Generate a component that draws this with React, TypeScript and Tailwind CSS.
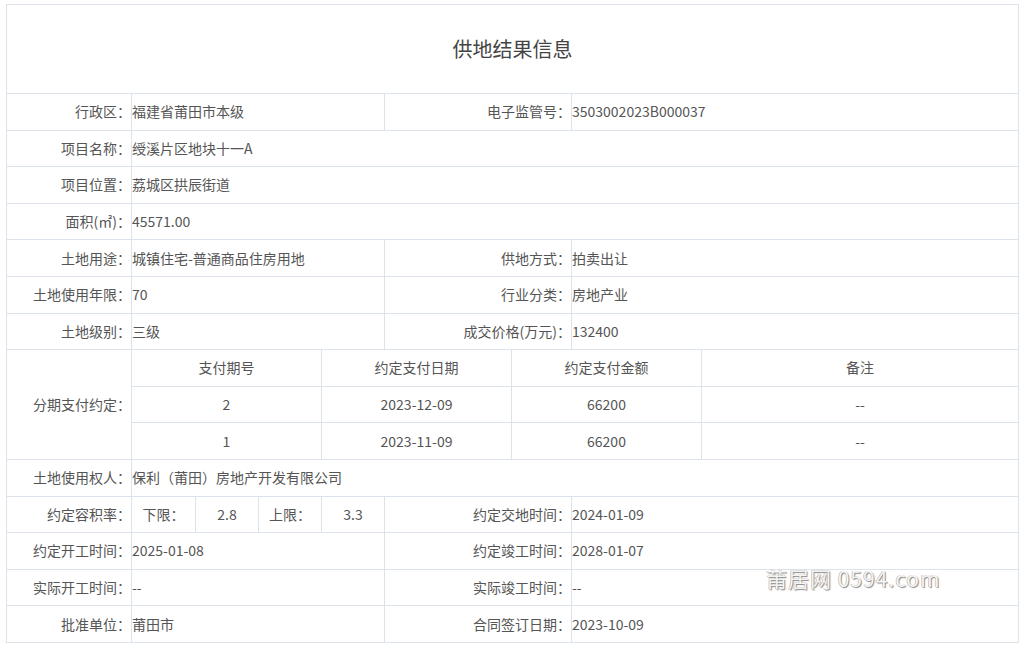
import React from "react";

const B = "border border-[#dde3ea]";
const L = `${B} text-right pr-0 whitespace-nowrap`;
const V = `${B} text-left`;
const C = `${B} text-center`;

function Row2({ a, b, c, d }: { a: string; b: string; c: string; d: string }) {
  return (
    <tr className="h-[36.6px]">
      <td className={L}>{a}</td>
      <td className={V} colSpan={4}>{b}</td>
      <td className={L} colSpan={2}>{c}</td>
      <td className={V} colSpan={2}>{d}</td>
    </tr>
  );
}
function Row1({ a, b }: { a: string; b: string }) {
  return (
    <tr className="h-[36.6px]">
      <td className={L}>{a}</td>
      <td className={V} colSpan={8}>{b}</td>
    </tr>
  );
}

export default function App() {
  return (
    <div
      className="relative w-[1024px] h-[646px] bg-white pt-[4px] pl-[6px] text-[14px] text-[#555]"
      style={{ fontFamily: '"Microsoft YaHei","Noto Sans CJK SC",sans-serif' }}
    >
      <table className="table-fixed border-collapse w-[1012px]">
        <colgroup>
          {[125, 64, 63, 63, 63, 127, 60, 130, 317].map((w, i) => (
            <col key={i} style={{ width: w }} />
          ))}
        </colgroup>
        <tbody>
          <tr className="h-[89px]">
            <td colSpan={9} className={`${C} text-[20px] text-[#444]`}>供地结果信息</td>
          </tr>
          <Row2 a="行政区：" b="福建省莆田市本级" c="电子监管号：" d="3503002023B000037" />
          <Row1 a="项目名称：" b="绶溪片区地块十一A" />
          <Row1 a="项目位置：" b="荔城区拱辰街道" />
          <Row1 a="面积(㎡)：" b="45571.00" />
          <Row2 a="土地用途：" b="城镇住宅-普通商品住房用地" c="供地方式：" d="拍卖出让" />
          <Row2 a="土地使用年限：" b="70" c="行业分类：" d="房地产业" />
          <Row2 a="土地级别：" b="三级" c="成交价格(万元)：" d="132400" />
          <tr className="h-[36.6px]">
            <td className={L} rowSpan={3}>分期支付约定：</td>
            <td className={C} colSpan={3}>支付期号</td>
            <td className={C} colSpan={2}>约定支付日期</td>
            <td className={C} colSpan={2}>约定支付金额</td>
            <td className={C}>备注</td>
          </tr>
          <tr className="h-[36.6px]">
            <td className={C} colSpan={3}>2</td>
            <td className={C} colSpan={2}>2023-12-09</td>
            <td className={C} colSpan={2}>66200</td>
            <td className={C}>--</td>
          </tr>
          <tr className="h-[36.6px]">
            <td className={C} colSpan={3}>1</td>
            <td className={C} colSpan={2}>2023-11-09</td>
            <td className={C} colSpan={2}>66200</td>
            <td className={C}>--</td>
          </tr>
          <Row1 a="土地使用权人：" b="保利（莆田）房地产开发有限公司" />
          <tr className="h-[36.6px]">
            <td className={L}>约定容积率：</td>
            <td className={C}>下限：</td>
            <td className={C}>2.8</td>
            <td className={C}>上限：</td>
            <td className={C}>3.3</td>
            <td className={L} colSpan={2}>约定交地时间：</td>
            <td className={V} colSpan={2}>2024-01-09</td>
          </tr>
          <Row2 a="约定开工时间：" b="2025-01-08" c="约定竣工时间：" d="2028-01-07" />
          <Row2 a="实际开工时间：" b="--" c="实际竣工时间：" d="--" />
          <Row2 a="批准单位：" b="莆田市" c="合同签订日期：" d="2023-10-09" />
        </tbody>
      </table>
      <div
        className="absolute left-[766px] top-[563px] text-[21px] text-[#f4f4f4] tracking-[1px]"
        style={{ textShadow: "1px 1px 1px #888, -0.5px -0.5px 0 #aaa" }}
      >
        莆居网 0594.com
      </div>
    </div>
  );
}
